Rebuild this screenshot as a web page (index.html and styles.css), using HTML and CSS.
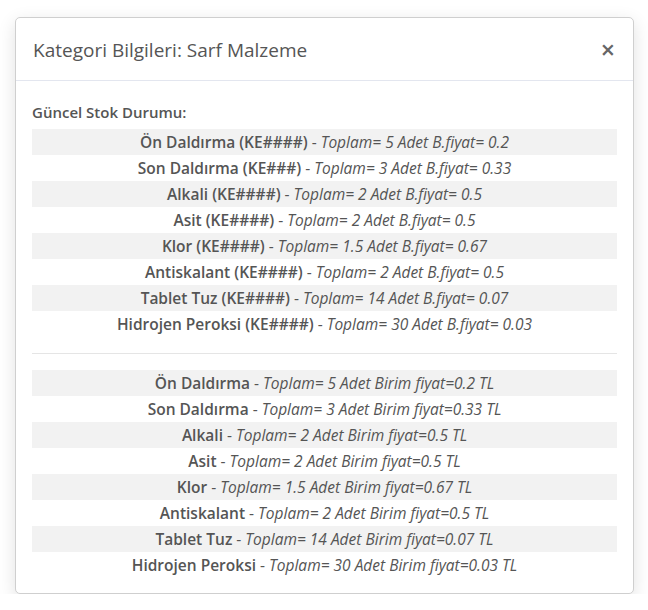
FILE: index.html
```html
<!DOCTYPE html>
<html>
<head>
<meta charset="utf-8">
<link rel="stylesheet" href="styles.css">
</head>
<body>
<div class="modal">
  <div class="modal-header">
    <h4 class="modal-title">Kategori Bilgileri: Sarf Malzeme</h4>
    <span class="close">&times;</span>
  </div>
  <div class="modal-body">
    <div class="label">Güncel Stok Durumu:</div>
    <ul class="list">
      <li><b>Ön Daldırma (KE####)</b> - <i>Toplam= 5 Adet B.fiyat= 0.2</i></li>
      <li><b>Son Daldırma (KE###)</b> - <i>Toplam= 3 Adet B.fiyat= 0.33</i></li>
      <li><b>Alkali (KE####)</b> - <i>Toplam= 2 Adet B.fiyat= 0.5</i></li>
      <li><b>Asit (KE####)</b> - <i>Toplam= 2 Adet B.fiyat= 0.5</i></li>
      <li><b>Klor (KE####)</b> - <i>Toplam= 1.5 Adet B.fiyat= 0.67</i></li>
      <li><b>Antiskalant (KE####)</b> - <i>Toplam= 2 Adet B.fiyat= 0.5</i></li>
      <li><b>Tablet Tuz (KE####)</b> - <i>Toplam= 14 Adet B.fiyat= 0.07</i></li>
      <li><b>Hidrojen Peroksi (KE####)</b> - <i>Toplam= 30 Adet B.fiyat= 0.03</i></li>
    </ul>
    <hr class="sep">
    <ul class="list">
      <li><b>Ön Daldırma</b> - <i>Toplam= 5 Adet Birim fiyat=0.2 TL</i></li>
      <li><b>Son Daldırma</b> - <i>Toplam= 3 Adet Birim fiyat=0.33 TL</i></li>
      <li><b>Alkali</b> - <i>Toplam= 2 Adet Birim fiyat=0.5 TL</i></li>
      <li><b>Asit</b> - <i>Toplam= 2 Adet Birim fiyat=0.5 TL</i></li>
      <li><b>Klor</b> - <i>Toplam= 1.5 Adet Birim fiyat=0.67 TL</i></li>
      <li><b>Antiskalant</b> - <i>Toplam= 2 Adet Birim fiyat=0.5 TL</i></li>
      <li><b>Tablet Tuz</b> - <i>Toplam= 14 Adet Birim fiyat=0.07 TL</i></li>
      <li><b>Hidrojen Peroksi</b> - <i>Toplam= 30 Adet Birim fiyat=0.03 TL</i></li>
    </ul>
  </div>
</div>
</body>
</html>
```
FILE: styles.css
```css
html, body {
  margin: 0;
  padding: 0;
  background: #ffffff;
}
body {
  font-family: "Open Sans", "Liberation Sans", sans-serif;
  color: #555555;
  padding: 17px 14px 0 15px;
}
.modal {
  width: 617px;
  height: 575px;
  border: 1px solid #cfcfcf;
  border-radius: 5px;
  background: #fff;
  box-shadow: 0 5px 18px rgba(0,0,0,0.12);
  box-sizing: content-box;
}
.modal-header {
  display: flex;
  align-items: center;
  justify-content: space-between;
  height: 62px;
  padding: 0 18px 0 17px;
  border-bottom: 1px solid #e3e6ef;
}
.modal-title {
  margin: 0;
  font-weight: 400;
  font-size: 19px;
  color: #555;
  padding-top: 1px;
}
.close {
  font-size: 25px;
  font-weight: 600;
  color: #666;
  line-height: 1;
}
.modal-body {
  padding: 19px 16px 0 16px;
}
.label {
  font-size: 15px;
  font-weight: 600;
  line-height: 26px;
  margin-top: -1px;
  margin-bottom: 4px;
}
.list {
  list-style: none;
  margin: 0;
  padding: 0;
}
.list li {
  height: 26px;
  line-height: 26px;
  text-align: center;
  font-size: 15.5px;
  white-space: nowrap;
}
.list li:nth-child(odd) {
  background: #f2f2f2;
}
.list b {
  font-weight: 600;
}
.sep {
  border: 0;
  border-top: 1px solid #e5e5e5;
  margin: 16px 0 16px 0;
}
```
